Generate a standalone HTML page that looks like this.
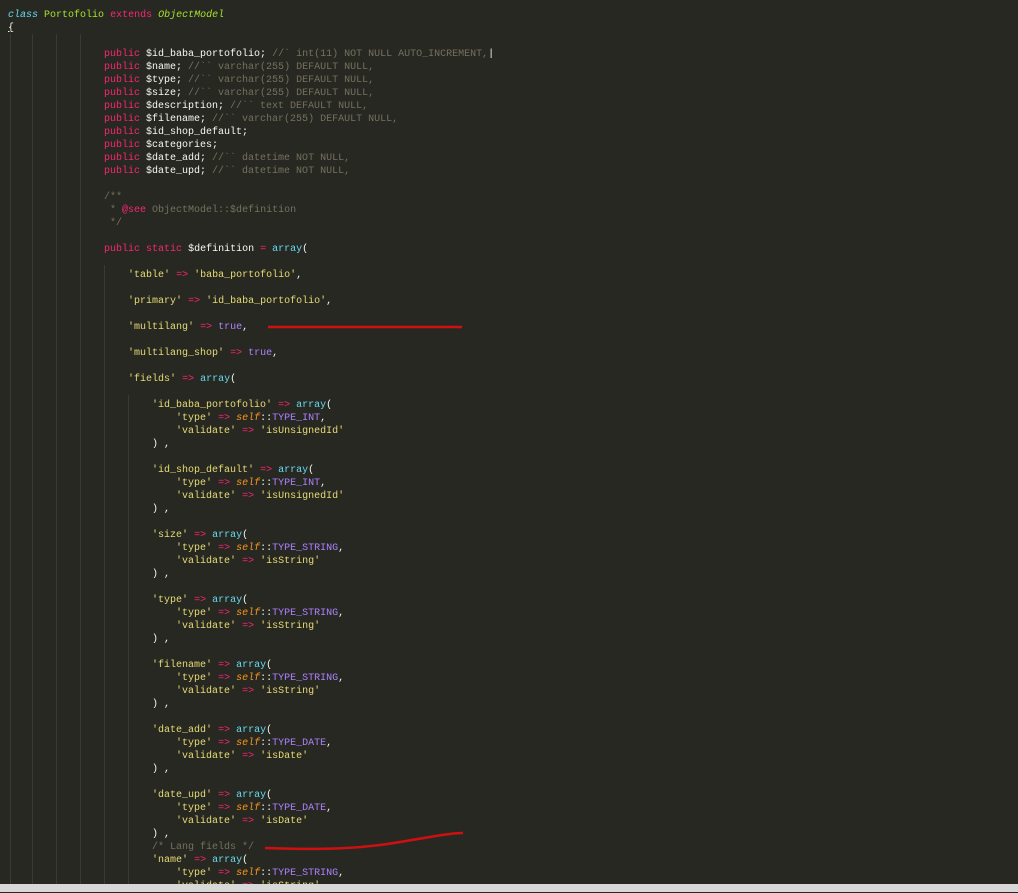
<!DOCTYPE html>
<html><head><meta charset="utf-8"><style>
html,body{margin:0;padding:0;width:1018px;height:892px;overflow:hidden;background:#272822;}
pre{position:absolute;left:8px;top:9px;margin:0;font-family:"Liberation Mono",monospace;font-size:10px;line-height:13px;color:#f8f8f2;}
.k{color:#f92672}.s{color:#e6db74}.c{color:#75715e}.f{color:#66d9ef}.i{color:#66d9ef;font-style:italic}
.g{color:#a6e22e}.gi{color:#a6e22e;font-style:italic}.o{color:#fd971f;font-style:italic}.p{color:#ae81ff}
.guide{position:absolute;top:34px;bottom:0;width:1px;background:#3a3a33}
.bar{position:absolute;left:0;top:884px;width:1018px;height:8px;background:#d8d8d8}
</style></head><body>
<div class="guide" style="left:10px"></div>
<div class="guide" style="left:32px"></div>
<div class="guide" style="left:56px"></div>
<div class="guide" style="left:80px"></div>
<div class="guide" style="left:104px;top:265px"></div>
<div class="guide" style="left:128px;top:395px"></div>
<pre><span class="i">class</span> <span class="g">Portofolio</span> <span class="k">extends</span> <span class="gi">ObjectModel</span>
<u>{</u>

                <span class="k">public</span> $id_baba_portofolio; <span class="c">//` int(11) NOT NULL AUTO_INCREMENT,</span>|
                <span class="k">public</span> $name; <span class="c">//`` varchar(255) DEFAULT NULL,</span>
                <span class="k">public</span> $type; <span class="c">//`` varchar(255) DEFAULT NULL,</span>
                <span class="k">public</span> $size; <span class="c">//`` varchar(255) DEFAULT NULL,</span>
                <span class="k">public</span> $description; <span class="c">//`` text DEFAULT NULL,</span>
                <span class="k">public</span> $filename; <span class="c">//`` varchar(255) DEFAULT NULL,</span>
                <span class="k">public</span> $id_shop_default;
                <span class="k">public</span> $categories;
                <span class="k">public</span> $date_add; <span class="c">//`` datetime NOT NULL,</span>
                <span class="k">public</span> $date_upd; <span class="c">//`` datetime NOT NULL,</span>

                <span class="c">/**</span>
<span class="c">                 * </span><span class="k">@see</span><span class="c"> ObjectModel::$definition</span>
<span class="c">                 */</span>

                <span class="k">public</span> <span class="k">static</span> $definition <span class="k">=</span> <span class="f">array</span>(

                    <span class="s">'table'</span> <span class="k">=&gt;</span> <span class="s">'baba_portofolio'</span>,

                    <span class="s">'primary'</span> <span class="k">=&gt;</span> <span class="s">'id_baba_portofolio'</span>,

                    <span class="s">'multilang'</span> <span class="k">=&gt;</span> <span class="p">true</span>,

                    <span class="s">'multilang_shop'</span> <span class="k">=&gt;</span> <span class="p">true</span>,

                    <span class="s">'fields'</span> <span class="k">=&gt;</span> <span class="f">array</span>(

                        <span class="s">'id_baba_portofolio'</span> <span class="k">=&gt;</span> <span class="f">array</span>(
                            <span class="s">'type'</span> <span class="k">=&gt;</span> <span class="o">self</span>::<span class="p">TYPE_INT</span>,
                            <span class="s">'validate'</span> <span class="k">=&gt;</span> <span class="s">'isUnsignedId'</span>
                        ) ,

                        <span class="s">'id_shop_default'</span> <span class="k">=&gt;</span> <span class="f">array</span>(
                            <span class="s">'type'</span> <span class="k">=&gt;</span> <span class="o">self</span>::<span class="p">TYPE_INT</span>,
                            <span class="s">'validate'</span> <span class="k">=&gt;</span> <span class="s">'isUnsignedId'</span>
                        ) ,

                        <span class="s">'size'</span> <span class="k">=&gt;</span> <span class="f">array</span>(
                            <span class="s">'type'</span> <span class="k">=&gt;</span> <span class="o">self</span>::<span class="p">TYPE_STRING</span>,
                            <span class="s">'validate'</span> <span class="k">=&gt;</span> <span class="s">'isString'</span>
                        ) ,

                        <span class="s">'type'</span> <span class="k">=&gt;</span> <span class="f">array</span>(
                            <span class="s">'type'</span> <span class="k">=&gt;</span> <span class="o">self</span>::<span class="p">TYPE_STRING</span>,
                            <span class="s">'validate'</span> <span class="k">=&gt;</span> <span class="s">'isString'</span>
                        ) ,

                        <span class="s">'filename'</span> <span class="k">=&gt;</span> <span class="f">array</span>(
                            <span class="s">'type'</span> <span class="k">=&gt;</span> <span class="o">self</span>::<span class="p">TYPE_STRING</span>,
                            <span class="s">'validate'</span> <span class="k">=&gt;</span> <span class="s">'isString'</span>
                        ) ,

                        <span class="s">'date_add'</span> <span class="k">=&gt;</span> <span class="f">array</span>(
                            <span class="s">'type'</span> <span class="k">=&gt;</span> <span class="o">self</span>::<span class="p">TYPE_DATE</span>,
                            <span class="s">'validate'</span> <span class="k">=&gt;</span> <span class="s">'isDate'</span>
                        ) ,

                        <span class="s">'date_upd'</span> <span class="k">=&gt;</span> <span class="f">array</span>(
                            <span class="s">'type'</span> <span class="k">=&gt;</span> <span class="o">self</span>::<span class="p">TYPE_DATE</span>,
                            <span class="s">'validate'</span> <span class="k">=&gt;</span> <span class="s">'isDate'</span>
                        ) ,
                        <span class="c">/* Lang fields */</span>
                        <span class="s">'name'</span> <span class="k">=&gt;</span> <span class="f">array</span>(
                            <span class="s">'type'</span> <span class="k">=&gt;</span> <span class="o">self</span>::<span class="p">TYPE_STRING</span>,
                            <span class="s">'validate'</span> <span class="k">=&gt;</span> <span class="s">'isString'</span>,
</pre>
<svg width="1018" height="892" style="position:absolute;left:0;top:0">
<path d="M268 327 L462 327" stroke="#d01010" stroke-width="2.5" fill="none"/>
<path d="M265 848 C320 850 360 849 400 842 C430 837 450 833 463 833" stroke="#d01010" stroke-width="2.5" fill="none"/>
</svg>
<div class="bar"></div>
</body></html>
